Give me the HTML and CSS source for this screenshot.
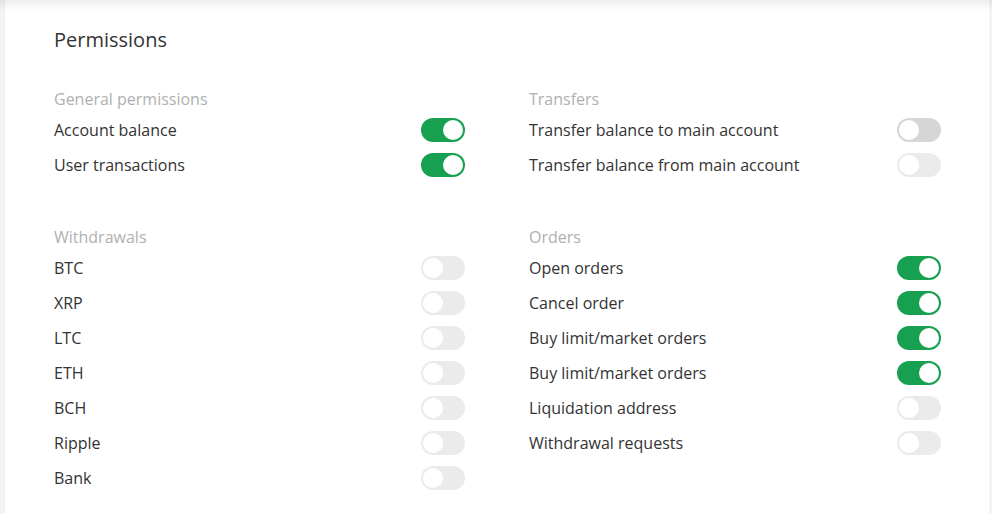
FILE: index.html
```html
<!DOCTYPE html>
<html lang="en">
<head>
    <meta charset="UTF-8">
    <meta name="viewport" content="width=device-width, initial-scale=1.0">
    <title>Permissions</title>
    <link rel="stylesheet" href="styles.css">
</head>
<body>

<div class="top-shade"></div>

<div class="card">
    <h2>Permissions</h2>

    <div class="perm-grid">
        <div class="perm-group">
            <h3>General permissions</h3>
            <div class="perm-row"><span>Account balance</span><label class="switch on"><span class="knob"></span></label></div>
            <div class="perm-row"><span>User transactions</span><label class="switch on"><span class="knob"></span></label></div>
        </div>

        <div class="perm-group">
            <h3>Transfers</h3>
            <div class="perm-row"><span>Transfer balance to main account</span><label class="switch hover"><span class="knob"></span></label></div>
            <div class="perm-row"><span>Transfer balance from main account</span><label class="switch"><span class="knob"></span></label></div>
        </div>

        <div class="perm-group">
            <h3>Withdrawals</h3>
            <div class="perm-row"><span>BTC</span><label class="switch"><span class="knob"></span></label></div>
            <div class="perm-row"><span>XRP</span><label class="switch"><span class="knob"></span></label></div>
            <div class="perm-row"><span>LTC</span><label class="switch"><span class="knob"></span></label></div>
            <div class="perm-row"><span>ETH</span><label class="switch"><span class="knob"></span></label></div>
            <div class="perm-row"><span>BCH</span><label class="switch"><span class="knob"></span></label></div>
            <div class="perm-row"><span>Ripple</span><label class="switch"><span class="knob"></span></label></div>
            <div class="perm-row"><span>Bank</span><label class="switch"><span class="knob"></span></label></div>
        </div>

        <div class="perm-group">
            <h3>Orders</h3>
            <div class="perm-row"><span>Open orders</span><label class="switch on"><span class="knob"></span></label></div>
            <div class="perm-row"><span>Cancel order</span><label class="switch on"><span class="knob"></span></label></div>
            <div class="perm-row"><span>Buy limit/market orders</span><label class="switch on"><span class="knob"></span></label></div>
            <div class="perm-row"><span>Buy limit/market orders</span><label class="switch on"><span class="knob"></span></label></div>
            <div class="perm-row"><span>Liquidation address</span><label class="switch"><span class="knob"></span></label></div>
            <div class="perm-row"><span>Withdrawal requests</span><label class="switch"><span class="knob"></span></label></div>
        </div>
    </div>
</div>

</body>
</html>
```

FILE: styles.css
```css
:root {
    --green: #17a04f;
    --text-color: #333;
    --muted: #b0b0b0;
    --track-off: #ebebeb;
    --page-bg: #f3f3f3;
}

body {
    margin: 0;
    font-family: 'Open Sans', sans-serif;
    background-color: var(--page-bg);
    color: var(--text-color);
}

.top-shade {
    position: fixed;
    top: 0;
    left: 0;
    right: 0;
    height: 10px;
    background: linear-gradient(rgba(0, 0, 0, 0.07), rgba(0, 0, 0, 0));
    pointer-events: none;
}

.card {
    margin: 0 3px 0 5px;
    padding: 26px 48px 40px 49px;
    background-color: #fff;
    min-height: 448px;
}

h2 {
    margin: 0;
    font-size: 20px;
    line-height: 28px;
    font-weight: 400;
    color: #333;
}

.perm-grid {
    display: grid;
    grid-template-columns: 411fr 412fr;
    column-gap: 64px;
    row-gap: 44px;
    margin-top: 34px;
}

h3 {
    margin: 0 0 2px;
    font-size: 16px;
    line-height: 22px;
    font-weight: 400;
    color: var(--muted);
}

.perm-row {
    display: flex;
    align-items: center;
    justify-content: space-between;
    height: 35px;
    font-size: 16px;
}

.switch {
    position: relative;
    width: 44px;
    height: 24px;
    border-radius: 12px;
    background-color: var(--track-off);
    cursor: pointer;
}

.switch.hover {
    background-color: #d6d6d6;
}

.switch.on {
    background-color: var(--green);
}

.knob {
    position: absolute;
    top: 2px;
    left: 2px;
    width: 20px;
    height: 20px;
    border-radius: 50%;
    background-color: #fff;
}

.switch.on .knob {
    left: 22px;
}
```
